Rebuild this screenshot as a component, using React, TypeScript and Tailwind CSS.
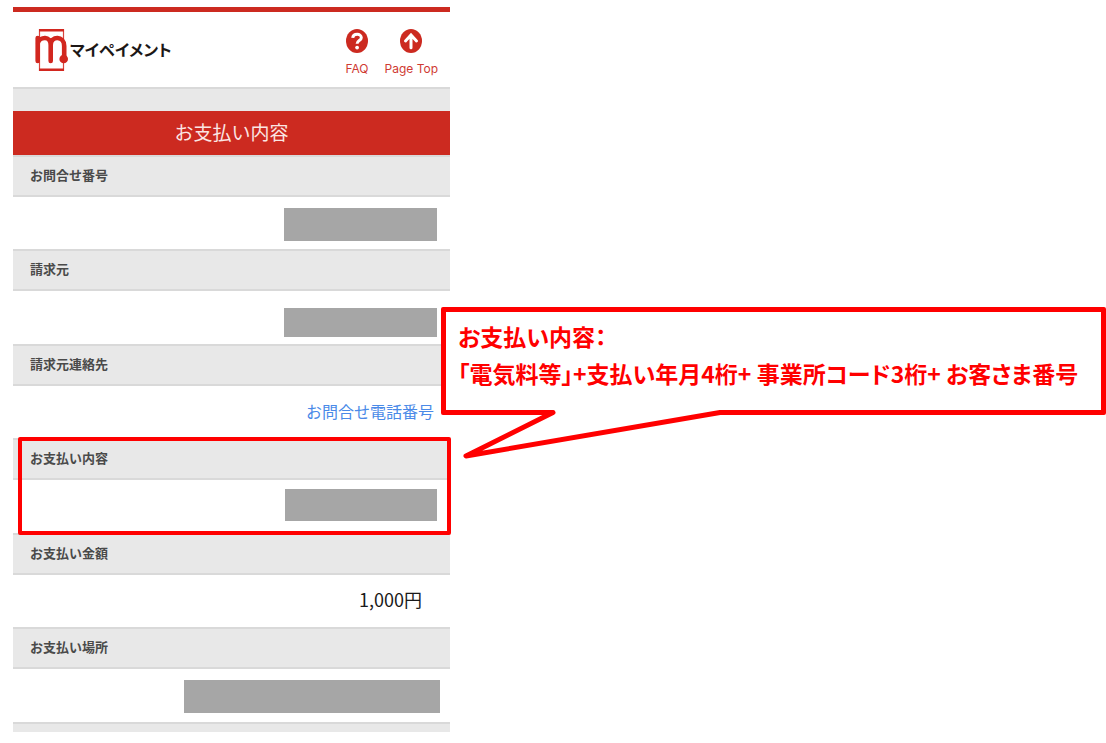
import type { ReactNode } from "react";

interface PaymentRowProps {
  label: string;
  highlighted?: boolean;
  bodyClass?: string;
  children: ReactNode;
}

function PaymentRow({ label, highlighted = false, bodyClass = "items-center pr-[13px]", children }: PaymentRowProps) {
  return (
    <section className="relative flex flex-col odd:h-[94px] even:h-[95px]">
      <h2 className="flex h-[42px] shrink-0 items-center border-y-2 border-[#d9d9d9] bg-[#e8e8e8] pb-0.5 pl-[17px] text-[13px] font-bold text-[#4a4a4a]">
        {label}
      </h2>
      <div className={`flex flex-1 justify-end ${bodyClass}`}>{children}</div>
      {highlighted && (
        <div className="pointer-events-none absolute -top-px -right-px -bottom-[2px] left-[5px] z-10 rounded-xs border-4 border-[#ff0000]" />
      )}
    </section>
  );
}

function LogoMark() {
  return (
    <svg width="34" height="44" viewBox="0 0 34 44" fill="none" aria-hidden="true">
      <path d="M4.5 1v42M28.5 1v42" stroke="#d9453e" strokeWidth="1.2" />
      <path d="M4 2.3h25M4 41.7h25" stroke="#d2271f" strokeWidth="2.6" />
      <path
        d="M2.7 10v23M2.7 15C5 8.5 15.7 7.5 15.7 17v16M15.7 17C15.7 7.5 29.2 7.500 29.2 18v12"
        stroke="#d2271f"
        strokeWidth="4.6"
        strokeLinecap="round"
      />
      <circle cx="28.7" cy="31" r="4.3" fill="#d2271f" />
    </svg>
  );
}

function QuestionIcon() {
  return (
    <svg width="22" height="24" viewBox="0 0 22 24" fill="none" aria-hidden="true">
      <ellipse cx="11" cy="12" rx="11" ry="12" fill="#cc2a20" />
      <path d="M6.7 8.8C7.2 4.3 15.3 4.1 15.3 8.7c0 3-4.2 2.7-4.2 6" stroke="#fff" strokeWidth="3" />
      <circle cx="11.1" cy="18.6" r="1.9" fill="#fff" />
    </svg>
  );
}

function ArrowUpIcon() {
  return (
    <svg width="22" height="24" viewBox="0 0 22 24" fill="none" aria-hidden="true">
      <ellipse cx="11" cy="12" rx="11" ry="12" fill="#cc2a20" />
      <path d="M11 18.8V7M5.5 12 11 6l5.5 6" stroke="#fff" strokeWidth="3" strokeLinecap="round" />
    </svg>
  );
}

function Masked({ className }: { className: string }) {
  return <div className={`bg-[#a6a6a6] ${className}`} />;
}

function Callout() {
  return (
    <aside className="absolute top-[307px] right-0 left-[441px] h-[108px] rounded-xs border-5 border-[#ff0000] bg-white pt-1.5 pl-3 text-[23px] leading-[37px] font-bold text-[#ff0000] [font-feature-settings:'palt']">
      <p>お支払い内容：</p>
      <p className="whitespace-nowrap">「電気料等」+支払い年月4桁+ 事業所コード3桁+ お客さま番号</p>
      {/* tail pointing at the highlighted row */}
      <svg className="absolute top-[97px] left-4" width="264" height="54" viewBox="0 0 264 54" fill="none" aria-hidden="true">
        <path d="M91 0H258V6L4 47 91 6z" fill="#fff" />
        <path
          d="M91 3.5 4 47 258 3.5"
          stroke="#ff0000"
          strokeWidth="5"
          strokeLinecap="round"
          strokeLinejoin="round"
        />
      </svg>
    </aside>
  );
}

export default function App() {
  return (
    <main
      className="relative min-h-screen bg-white pt-[7px] pl-[13px] font-['Noto_Sans_CJK_JP',sans-serif]"
      lang="ja"
    >
      <div className="w-full max-w-[437px]">
        <header id="top" className="flex h-20 items-start justify-between border-t-5 border-[#cc2a20] pt-4 pr-3 pl-[22px]">
          <a href="#top" className="flex items-center gap-px">
            <LogoMark />
            <span className="pb-0.5 text-[16px] font-bold text-[#1c1716] [font-feature-settings:'palt']">
              マイペイメント
            </span>
          </a>
          <nav className="flex gap-4 pt-px font-['Inter','Noto_Sans_CJK_JP',sans-serif] text-[12px] leading-4 text-[#cf3a33]">
            <a href="#faq" className="flex flex-col items-center gap-2">
              <QuestionIcon />
              FAQ
            </a>
            <a href="#top" className="flex flex-col items-center gap-2">
              <ArrowUpIcon />
              Page Top
            </a>
          </nav>
        </header>
        <div className="h-6 border-t-2 border-[#d9d9d9] bg-[#e8e8e8]" />
        <h1 className="flex h-11 items-center justify-center bg-[#cc2a20] pb-0.5 text-[19px] font-normal text-[#fbe6e4]">
          お支払い内容
        </h1>

        <div>
          <PaymentRow label="お問合せ番号" bodyClass="items-end pr-[13px] pb-2">
            <Masked className="h-[33px] w-[153px]" />
          </PaymentRow>
          <PaymentRow label="請求元" bodyClass="items-end pr-[13px] pb-[7px]">
            <Masked className="h-[29px] w-[153px]" />
          </PaymentRow>
          <PaymentRow label="請求元連絡先" bodyClass="items-center pr-4 pb-0.5">
            <a href="#contact" className="text-[16px] text-[#4a8ae8]">
              お問合せ電話番号
            </a>
          </PaymentRow>
          <PaymentRow label="お支払い内容" highlighted bodyClass="items-center pr-[13px] pb-1">
            <Masked className="h-8 w-[152px]" />
          </PaymentRow>
          <PaymentRow label="お支払い金額" bodyClass="items-center pr-7 pb-1">
            <span className="text-[18px] text-[#1a1a1a]">1,000円</span>
          </PaymentRow>
          <PaymentRow label="お支払い場所" bodyClass="items-end pr-[10px] pb-[9px]">
            <Masked className="h-[33px] w-64" />
          </PaymentRow>
        </div>
        <div className="h-[10px] border-t-2 border-[#d9d9d9] bg-[#e8e8e8]" />
      </div>

      <Callout />
    </main>
  );
}
